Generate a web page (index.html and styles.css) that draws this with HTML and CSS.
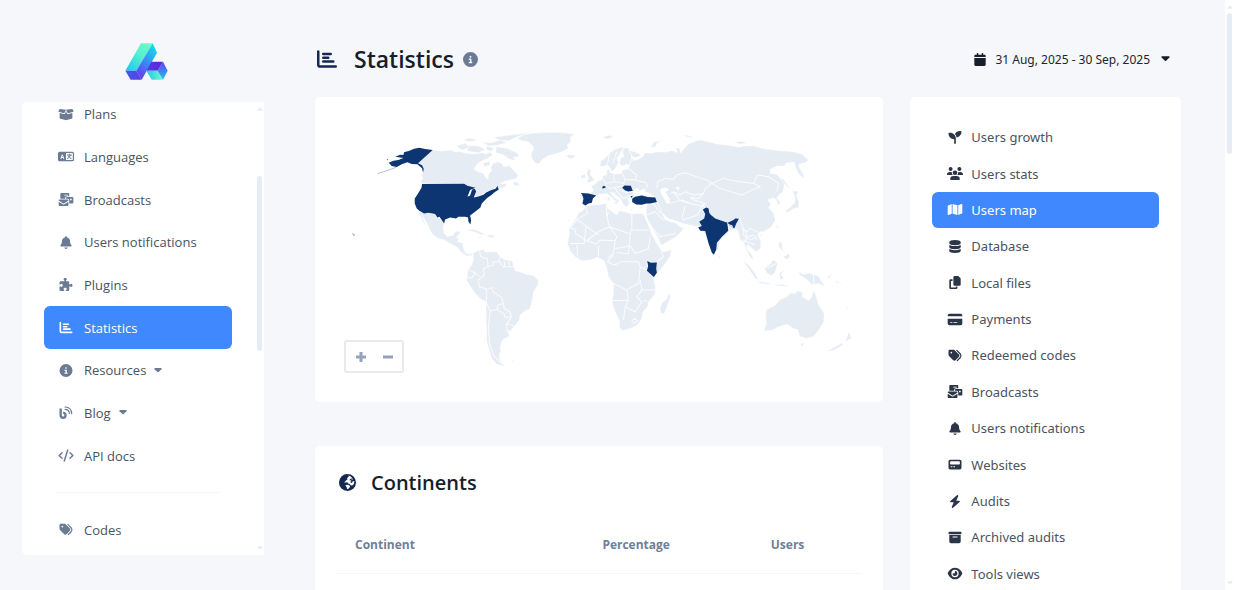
FILE: index.html
```html
<!DOCTYPE html>
<html lang="en">
<head>
<meta charset="utf-8">
<title>Statistics</title>
<link rel="stylesheet" href="styles.css">
</head>
<body>
<svg class="sprite" aria-hidden="true">
  <symbol id="i-chart" viewBox="0 0 512 512"><path d="M0 64a32 32 0 0 1 64 0V400a16 16 0 0 0 16 16H480a32 32 0 0 1 0 64H80A80 80 0 0 1 0 400ZM160 96H352a32 32 0 0 1 0 64H160a32 32 0 0 1 0-64ZM160 192H288a32 32 0 0 1 0 64H160a32 32 0 0 1 0-64ZM160 288H416a32 32 0 0 1 0 64H160a32 32 0 0 1 0-64Z"/></symbol>
  <symbol id="i-bell" viewBox="0 0 448 512"><path d="M224 0c-17.700 0-32 14.300-32 32V51.200C119 66 64 130.600 64 208v18.800c0 47-17.300 92.400-48.500 127.600l-7.400 8.300c-8.400 9.400-10.400 22.900-5.300 34.400S19.400 416 32 416H416c12.600 0 24-7.400 29.200-18.900s3.100-25-5.300-34.400l-7.400-8.300C401.300 319.200 384 273.900 384 226.800V208c0-77.400-55-142-128-156.800V32c0-17.700-14.300-32-32-32zm45.300 493.300c12-12 18.700-28.300 18.700-45.300H160c0 17 6.700 33.300 18.700 45.300s28.300 18.700 45.300 18.700s33.300-6.700 45.300-18.700z"/></symbol>
  <symbol id="i-info" viewBox="0 0 512 512"><path d="M256 512A256 256 0 1 0 256 0a256 256 0 1 0 0 512zM216 336h24V272H216a24 24 0 0 1 0-48h48a24 24 0 0 1 24 24v88h8a24 24 0 0 1 0 48H216a24 24 0 0 1 0-48zm40-208a32 32 0 1 1 0 64 32 32 0 1 1 0-64z"/></symbol>
  <symbol id="i-tags" viewBox="0 0 512 512"><path d="M345 39.100L472.800 168.400c52.400 53 52.400 138.200 0 191.200L360.800 472.900c-9.300 9.400-24.500 9.500-33.900.2s-9.500-24.500-.2-33.900L438.600 325.900c33.900-34.300 33.900-89.400 0-123.700L310.900 72.900c-9.300-9.400-9.200-24.600.2-33.900s24.600-9.200 33.900.2zM0 229.500V80C0 53.500 21.500 32 48 32H197.500c17 0 33.300 6.700 45.300 18.700l168 168c25 25 25 65.500 0 90.500L277.300 442.700c-25 25-65.500 25-90.500 0l-168-168C6.700 262.700 0 246.500 0 229.500zM144 144a32 32 0 1 0-64 0 32 32 0 1 0 64 0z"/></symbol>
  <symbol id="i-calendar" viewBox="0 0 448 512"><path d="M96 32V64H48C21.500 64 0 85.500 0 112v48H448V112c0-26.500-21.500-48-48-48H352V32a32 32 0 0 0-64 0V64H160V32a32 32 0 0 0-64 0zM448 192H0V464c0 26.500 21.500 48 48 48H400c26.500 0 48-21.500 48-48V192z"/></symbol>
  <symbol id="i-seedling" viewBox="0 0 512 512"><path d="M512 32c0 113.600-84.600 207.500-194.200 222c-7.100-53.400-30.600-101.600-65.300-139.300C290.800 46.300 364 0 448 0h32c17.700 0 32 14.300 32 32zM0 96C0 78.300 14.300 64 32 64H64c123.700 0 224 100.300 224 224v192a32 32 0 0 1-64 0V320C100.300 320 0 219.700 0 96z"/></symbol>
  <symbol id="i-users" viewBox="0 0 640 512"><circle cx="144" cy="80" r="80"/><circle cx="496" cy="80" r="80"/><circle cx="320" cy="225" r="94"/><path d="M0 300a108 108 0 0 1 107-108h42q25 0 46 10a128 128 0 0 0 40 118H22q-22 0-22-20ZM405 320a128 128 0 0 0 40-118q21-10 46-10h42a108 108 0 0 1 107 108q0 20-22 20ZM128 485A133 133 0 0 1 261 352H379A133 133 0 0 1 512 485q0 27-27 27H155q-27 0-27-27Z"/></symbol>
  <symbol id="i-map" viewBox="0 0 576 512"><path d="M384 476L192 421V36L384 91ZM416 475V88L543 37c16-6 33 5 33 22V395q0 16-15 22ZM15 95L160 37V424L33 475c-16 6-33-6-33-23V117q0-16 15-22Z"/></symbol>
  <symbol id="i-database" viewBox="0 0 448 512"><path d="M448 80v48c0 44-100 80-224 80S0 172 0 128V80C0 36 100 0 224 0S448 36 448 80zM393 215c21-8 40-17 55-29V288c0 44-100 80-224 80S0 332 0 288V186c15 12 34 21 55 29 45 16 105 25 169 25s124-9 169-25zM0 346c15 12 34 21 55 29 45 16 105 25 169 25s124-9 169-25c21-8 40-17 55-29v86c0 44-100 80-224 80S0 476 0 432V346z"/></symbol>
  <symbol id="i-copy" viewBox="0 0 448 512"><path d="M208 0H332q20 0 34 14l68 68q14 14 14 34V336a48 48 0 0 1-48 48H208a48 48 0 0 1-48-48V48a48 48 0 0 1 48-48zM48 128h80v64H64V448H256V416h64v48a48 48 0 0 1-48 48H48a48 48 0 0 1-48-48V176a48 48 0 0 1 48-48z"/></symbol>
  <symbol id="i-card" viewBox="0 0 576 512"><path d="M64 32A64 64 0 0 0 0 96v32H576V96a64 64 0 0 0-64-64ZM576 224H0V416a64 64 0 0 0 64 64H512a64 64 0 0 0 64-64ZM112 352h64a16 16 0 0 1 0 32H112a16 16 0 0 1 0-32ZM240 352H368a16 16 0 0 1 0 32H240a16 16 0 0 1 0-32Z" fill-rule="evenodd"/></symbol>
  <symbol id="i-mail" viewBox="0 0 576 512"><path fill-rule="evenodd" d="M64 32Q64 0 96 0H384q32 0 32 32v96H320q-64 0-64 64v32H64ZM224 64q-16 0-16 16t16 16H352q16 0 16-16t-16-16ZM320 160H544q32 0 32 32V384q0 32-32 32H416V288q0-60-60-64H288V192q0-32 32-32ZM448 224v64h64v-64ZM0 288q0-32 32-32H352q32 0 32 32v12L208 410q-16 10-32 0L0 300ZM0 344 158 442q34 20 68 0L384 344V480q0 32-32 32H32q-32 0-32-32Z"/></symbol>
  <symbol id="i-site" viewBox="0 0 512 512"><path fill-rule="evenodd" d="M64 64H448a64 64 0 0 1 64 64V384a64 64 0 0 1-64 64H64a64 64 0 0 1-64-64V128a64 64 0 0 1 64-64ZM96 128q-32 0-32 32v64q0 32 32 32H416q32 0 32-32V160q0-32-32-32ZM88 320v48h64v-48ZM192 320v48h64v-48Z"/></symbol>
  <symbol id="i-bolt" viewBox="0 0 448 512"><path d="M349 45c6-14 2-30-10-39s-29-8-40 2l-256 224c-10 9-14 23-9 35s17 21 30 21H175L99 467c-6 14-2 30 10 39s29 8 40-2l256-224c10-9 14-23 9-35s-17-21-30-21H273L349 45z"/></symbol>
  <symbol id="i-archive" viewBox="0 0 512 512"><path fill-rule="evenodd" d="M32 32H480a32 32 0 0 1 32 32V96a32 32 0 0 1-32 32H32A32 32 0 0 1 0 96V64A32 32 0 0 1 32 32ZM32 160H480V416a64 64 0 0 1-64 64H96a64 64 0 0 1-64-64ZM176 212a24 24 0 0 0 0 48H336a24 24 0 0 0 0-48Z"/></symbol>
  <symbol id="i-eye" viewBox="0 0 576 512"><path fill-rule="evenodd" d="M288 32C207 32 142 69 95 113C49 156 17 208 3 244q-5 12 0 24C17 304 49 356 95 399C142 443 207 480 288 480s146-37 193-81c46-43 78-95 92-131q5-12 0-24C559 208 527 156 481 113C434 69 369 32 288 32ZM144 256a144 144 0 1 1 288 0 144 144 0 1 1-288 0ZM288 192q0 64-64 64-16 0-32-4a96 96 0 1 0 92-92q4 16 4 32Z"/></symbol>
  <symbol id="i-puzzle" viewBox="0 0 512 512"><path d="M192 105q0-13-13-23-19-14-19-34c0-27 29-48 64-48s64 21 64 48q0 20-19 34-13 10-13 23 0 23 23 23h57a48 48 0 0 1 48 48v57q0 23 23 23 13 0 23-13 14-19 34-19c27 0 48 29 48 64s-21 64-48 64q-20 0-34-19-10-13-23-13-23 0-23 23V464a48 48 0 0 1-48 48H279q-23 0-23-23 0-13 13-23 19-14 19-34c0-27-29-48-64-48s-64 21-64 48q0 20 19 34 13 10 13 23 0 23-23 23H48a48 48 0 0 1-48-48V343q0-23 23-23 13 0 23 13 14 19 34 19c27 0 48-29 48-64s-21-64-48-64q-20 0-34 19-10 13-23 13-23 0-23-23V176a48 48 0 0 1 48-48H169q23 0 23-23Z"/></symbol>
  <symbol id="i-box" viewBox="0 0 640 512"><path d="M58 42Q65 30 80 32L320 64 260 190Q250 210 228 205L28 148Q8 142 16 122ZM582 42Q575 30 560 32L320 64 380 190Q390 210 412 205L612 148Q632 142 624 122ZM320 130 352 205Q375 250 425 238L576 196V390Q576 422 544 430L340 478Q320 484 300 478L96 430Q64 422 64 390V196L215 238Q265 250 288 205Z"/></symbol>
  <symbol id="i-lang" viewBox="0 0 640 512"><path fill-rule="evenodd" d="M64 64H576a64 64 0 0 1 64 64V384a64 64 0 0 1-64 64H64a64 64 0 0 1-64-64V128a64 64 0 0 1 64-64ZM320 112V400H576q16 0 16-16V128q0-16-16-16Z"/><path class="cut" d="M90 346 158 175H186L254 346H208L195 312H149L136 346ZM160 276H184L172 240Z" fill-rule="evenodd"/><path d="M372 196H540M456 160v36M500 200Q474 300 380 340M410 236Q450 310 528 340" fill="none" stroke="currentColor" stroke-width="38" stroke-linecap="round"/></symbol>
  <symbol id="i-blog" viewBox="0 0 512 512"><path d="M46 100V368A96 96 0 1 0 142 272" fill="none" stroke="currentColor" stroke-width="92"/><path d="M220 40Q470 50 480 300M220 130Q380 135 390 290" fill="none" stroke="currentColor" stroke-width="48" stroke-linecap="round"/></symbol>
  <symbol id="i-code" viewBox="0 0 640 512"><path d="M390 40 250 472M480 145 594 256 480 367M160 145 46 256 160 367" fill="none" stroke="currentColor" stroke-width="60" stroke-linecap="round" stroke-linejoin="round"/></symbol>
  <symbol id="i-globe" viewBox="0 0 512 512"><circle cx="256" cy="256" r="256"/><path class="cut" d="M250 48 300 60 275 100 240 120 260 155 220 185 185 225 150 245 205 258 250 245 275 285 325 298 360 350 400 350Q468 290 464 215L420 215 385 250 350 200 380 170 420 165Q370 55 250 48ZM190 330 275 320 335 365 320 405 270 463Q225 445 235 405Z"/><path d="M300 190 350 140 410 130 370 180ZM350 215 405 240 385 270 340 250Z"/></symbol>
  <symbol id="i-caret" viewBox="0 0 10 6"><path d="M1 0H9Q10 .5 9.300 1.300L5.700 5Q5 5.600 4.300 5L.7 1.300Q0 .5 1 0Z"/></symbol>
</svg>

<div class="app">
  <aside class="sidebar">
    <a class="logo" href="#" aria-label="Home">
      <svg viewBox="0 0 129 111" width="43" height="37">
        <defs>
          <linearGradient id="g1" x1="0" y1="1" x2="1" y2="0"><stop offset="0" stop-color="#18c8f2"/><stop offset=".55" stop-color="#58eed2"/><stop offset="1" stop-color="#70ffc4"/></linearGradient>
          <linearGradient id="g2" x1=".8" y1="0" x2=".2" y2="1"><stop offset="0" stop-color="#14dfe6"/><stop offset=".55" stop-color="#3d86f8"/><stop offset="1" stop-color="#6c37f0"/></linearGradient>
          <linearGradient id="g3"><stop offset="0" stop-color="#4b56ee"/><stop offset="1" stop-color="#5b25dc"/></linearGradient>
          <linearGradient id="g4"><stop offset="0" stop-color="#22c4ee"/><stop offset="1" stop-color="#70ffc4"/></linearGradient>
          <linearGradient id="g5" x1=".5" y1="0" x2=".6" y2="1"><stop offset="0" stop-color="#6a38f2"/><stop offset="1" stop-color="#1dc7ef"/></linearGradient>
        </defs>
        <path fill="url(#g1)" d="M48 1H83L34 83H1Z"/>
        <path fill="url(#g2)" d="M83 1 96 29 50 110 34 83Z"/>
        <path fill="url(#g3)" d="M1 83H34L50 110H17ZM79 56H114L98 83H64Z"/>
        <path fill="url(#g4)" d="M64 83H98L114 110H80Z"/>
        <path fill="url(#g5)" d="M114 56 128 83 114 110 98 83Z"/>
      </svg>
    </a>
    <div class="side-panel">
      <nav class="side-nav">
        <ul class="side-list">
          <li><a href="#"><svg class="icon"><use href="#i-box"/></svg>Plans</a></li>
          <li><a href="#"><svg class="icon"><use href="#i-lang"/></svg>Languages</a></li>
          <li><a href="#"><svg class="icon"><use href="#i-mail"/></svg>Broadcasts</a></li>
          <li><a href="#"><svg class="icon"><use href="#i-bell"/></svg>Users notifications</a></li>
          <li><a href="#"><svg class="icon"><use href="#i-puzzle"/></svg>Plugins</a></li>
          <li><a class="active" href="#"><svg class="icon"><use href="#i-chart"/></svg>Statistics</a></li>
          <li><a href="#"><svg class="icon"><use href="#i-info"/></svg>Resources<svg class="caret"><use href="#i-caret"/></svg></a></li>
          <li><a href="#"><svg class="icon"><use href="#i-blog"/></svg>Blog<svg class="caret"><use href="#i-caret"/></svg></a></li>
          <li><a href="#"><svg class="icon"><use href="#i-code"/></svg>API docs</a></li>
        </ul>
        <hr>
        <ul class="side-list-end">
          <li><a href="#"><svg class="icon"><use href="#i-tags"/></svg>Codes</a></li>
        </ul>
      </nav>
      <div class="side-scroll"><svg class="arrow up"><use href="#i-caret"/></svg><span class="thumb"></span><svg class="arrow"><use href="#i-caret"/></svg></div>
    </div>
  </aside>

  <main class="content">
    <header class="page-head">
      <h1><svg class="head-icon"><use href="#i-chart"/></svg>Statistics<svg class="head-info"><use href="#i-info"/></svg></h1>
      <button class="date" type="button"><svg class="date-icon"><use href="#i-calendar"/></svg>31 Aug, 2025 - 30 Sep, 2025<svg class="caret"><use href="#i-caret"/></svg></button>
    </header>
    <div class="columns">
      <div class="reports">
        <section class="card map-card">
          <svg class="map" viewBox="315 97 568 305" role="img" aria-label="Users map">
            <g transform="translate(350 120) scale(.33333)">
              <path class="land" d="M248 90 275 93 300 90 315 96 330 95 350 100 375 102 395 98 405 103 420 97 428 105 410 116 390 125 378 135 372 148 385 156 400 160 406 172 414 178 415 164 425 152 422 142 430 130 442 126 455 130 462 141 478 137 488 148 504 166 498 176 478 180 462 184 448 192 470 190 466 199 450 206 440 200 424 210 405 217 385 229 371 228 376 203 352 197 342 191 216 191 212 182 219 175 213 165 220 157 216 136 204 130Z"/>
              <path class="land" d="M320 78 345 70 360 82 335 90ZM350 76 385 78 405 88 385 98 352 93ZM395 66 425 68 450 60 470 68 440 76 415 78ZM430 52 480 46 540 38 500 50 475 62 450 60ZM438 80 470 85 500 98 508 108 490 112 497 122 478 118 462 105 438 98ZM410 78 430 84 425 94 408 90ZM490 184 504 188 508 197 490 195ZM340 62 370 64 380 58 355 55ZM398 130 418 124 420 135 405 140Z"/>
              <path class="land" d="M502 55 520 45 545 40 600 37 640 38 672 42 660 52 662 65 650 75 655 85 635 95 610 103 592 108 575 120 566 132 555 128 545 115 543 100 550 90 548 78 535 65 515 62ZM648 108 658 104 675 106 672 113 658 116Z"/>
              <path class="land" d="M206 274 222 280 235 278 255 282 262 292 275 300 282 310 279 325 282 340 292 350 308 346 316 335 332 333 326 345 318 352 325 354 323 366 338 368 340 386 348 400 358 402 370 398 364 406 350 407 335 398 322 382 302 371 283 360 262 354 247 342 238 325 228 305 216 284 220 300 230 322 218 305 212 290Z"/>
              <path class="land" d="M350 332 368 327 388 334 405 343 390 343 370 334ZM408 346 425 344 436 350 422 353ZM385 351 396 352 388 355Z"/>
              <path class="user" d="M116 128 130 122 145 120 160 114 136 110 150 104 160 105 162 97 178 92 192 86 208 83 225 87 248 90 204 130 216 136 221 146 219 158 216 145 202 133 185 132 172 127 155 133 140 141 125 138ZM110 117l5 2-3 2Z"/>
              <path class="isles" d="M138 142 110 152 82 161M8 340 14 344 11 348Z"/>
              <path class="user" d="M216 192 342 191 352 197 376 203 360 210 352 230 360 226 366 208 374 206 378 214 371 232 385 229 400 224 408 217 424 210 436 206 442 198 446 208 432 217 424 225 412 233 405 240 395 250 391 262 375 275 360 286 363 300 361 313 355 305 354 292 345 290 325 290 318 295 300 292 285 298 282 310 275 300 268 290 262 292 255 282 235 278 222 280 208 272 200 265 194 250 194 235 202 223 214 204Z"/>
            </g>
            <g transform="translate(350 240) scale(.33333)">
              <path class="land" d="M370 38 385 31 400 28 405 36 425 35 440 36 450 50 465 60 485 62 492 80 495 92 515 97 530 103 550 107 565 120 563 135 550 155 546 180 540 205 525 212 510 225 507 240 495 255 482 272 472 272 478 288 460 297 455 305 450 320 452 332 447 345 450 360 464 378 440 372 425 355 418 330 410 305 410 280 408 240 408 185 390 175 375 160 362 140 349 120 352 110 352 92 365 75 370 60ZM484 361 494 362 488 365Z"/>
              <path class="edge" d="M388 32 392 50 412 56 414 80 400 85 403 105 384 120 388 140 407 146 410 165 408 185 420 212 415 260 418 310 430 345 455 372M414 80 430 75 428 66 447 64 450 50M447 64 460 80 492 80M462 62 464 80M476 62 478 78M354 90 376 98 366 112 352 114M376 98 388 110M407 150 425 142 428 155 455 172 460 190 445 194 440 208 420 212M460 190 462 205 480 215 484 230 465 232 462 222 440 208M484 232 470 250 470 272M470 250 495 260"/>
            </g>
            <g transform="translate(560 120) scale(.33333)">
              <path class="land" d="M192 84 202 84 212 92 235 100 242 108 225 112 214 109 220 122 235 118 250 108 255 98 275 100 290 95 315 97 335 92 352 98 348 85 356 83 362 100 372 85 385 72 410 62 425 60 445 66 470 72 500 75 535 82 550 78 580 78 620 88 660 92 700 95 725 103 745 120 735 128 715 133 718 145 730 165 730 175 715 160 705 140 702 126 680 128 670 138 650 138 630 148 630 160 650 163 664 178 672 192 668 215 655 225 650 235 662 248 655 255 648 240 640 232 622 240 632 252 625 262 640 280 645 300 632 322 610 335 600 335 592 345 602 365 600 385 588 395 575 385 562 372 560 385 575 405 580 420 570 412 555 385 550 365 540 360 535 335 525 325 510 330 500 340 480 360 473 390 460 398 450 370 440 345 425 330 412 318 400 318 375 312 355 305 340 300 325 296 308 280 302 276 315 298 330 305 345 308 360 320 370 325 358 340 345 352 310 372 302 375 295 355 280 330 264 300 258 285 258 270 262 252 245 254 216 246 213 234 202 235 207 250 199 262 188 250 180 235 165 222 160 216 150 218 162 232 178 242 172 248 165 242 150 228 142 220 125 222 108 226 98 235 95 248 76 255 66 250 66 224 62 219 92 220 100 210 92 197 104 193 112 183 125 180 126 170 140 163 140 150 148 148 150 158 165 163 185 160 187 150 205 146 208 136 200 133 185 138 178 130 180 118 192 108 186 98Z"/>
              <path class="land" d="M120 138 122 122 135 115 150 98 165 88 185 82 196 85 182 97 170 115 175 128 165 145 155 155 148 140 138 135 128 140ZM84 147 92 150 90 163 102 178 98 185 78 187 86 176 80 160ZM62 168 74 162 76 172 64 176ZM128 50 150 46 158 52 140 57ZM272 80 282 66 305 62 290 70 284 82ZM370 44 392 48 400 53 380 50ZM520 66 545 64 560 68 540 72ZM142 232 148 230 148 242 142 241ZM160 246 172 246 168 254ZM205 268 218 268 215 272ZM238 262 250 258 244 266Z"/>
              <path class="sea" d="M218 222 222 208 232 203 240 212 250 207 258 206 252 213 272 222 284 231 262 229 245 225 225 228ZM300 208 312 202 322 204 326 210 316 216 328 235 330 248 320 252 313 238 303 222ZM346 202 358 200 356 212Z"/>
              <path class="land" d="M76 258 100 255 120 253 138 250 142 265 155 274 170 285 178 272 195 275 215 282 240 280 250 282 258 302 268 325 275 345 290 370 302 388 310 396 333 389 330 408 312 435 290 460 281 476 285 500 285 522 265 545 262 560 248 575 245 595 230 615 210 625 185 632 178 620 178 602 165 575 155 545 160 520 160 490 145 470 140 445 132 422 112 411 90 420 65 422 45 410 30 392 22 370 28 340 26 325 45 300 55 280 70 270ZM327 518 331 530 320 560 312 580 302 580 300 565 305 548 318 538ZM20 299 30 300 24 303Z"/>
              <path class="edge" d="M76 258 82 280 50 298 30 325 45 327 46 340 80 362 115 335 148 320 140 290 138 250M140 290 145 275M50 298 78 318 115 345M148 320 210 342 212 330 266 330M215 282 215 330M78 318 72 370 30 370M80 362 108 372 120 360 165 362 170 350 148 320M115 378 115 410M50 375 52 410M165 362 160 400 142 415M170 398 205 400 210 342M165 385 210 378 225 400 265 385 270 350M160 405 142 425 160 435 175 430 180 425 235 425 240 440 235 490 215 500 200 510 160 490M200 510 205 540 155 542M240 440 262 452 260 430 265 423M240 480 245 510 283 510M205 540 195 560 190 600M195 560 225 575 245 545 230 530 245 510M250 540 262 545M215 602 225 595 232 603 222 610ZM300 385 310 410 290 425M258 285 285 275 310 300M258 300 300 350 345 340"/>
              <path class="edge" d="M192 84 185 92 190 108M206 85 215 110 208 136M148 98 142 135M170 95 158 130M205 146 230 165 225 180 258 188 262 203M187 160 195 180 225 178M160 165 163 185 190 190 195 180M126 172 135 190 163 185M135 195 150 205 188 198M165 205 178 225 190 235 215 225M180 210 200 218 218 214M290 205 292 185 315 175 340 178 350 165 375 158 415 172 440 180 455 190 435 205 430 220 400 225 375 215 358 225 340 215 330 222M455 190 490 175 520 182 580 190 592 165 625 170 655 190 650 215M455 190 478 205 545 225 585 205 600 200 580 190M340 215 358 240 385 250M430 220 415 235 390 232 400 240 435 250 425 260M330 250 365 240 395 252 425 258 412 285 370 300 365 290 375 260M290 246 305 275M262 252 280 250 300 280M425 250 460 300 500 312 540 295 548 325 560 335 570 325 600 340M548 325 550 345 570 360 590 350M548 360 585 375"/>
              <path class="user" d="M62 219 85 220 108 226 98 235 95 248 85 250 76 256 67 251 70 235 66 224ZM126 201 131 197 138 201 133 204 127 205ZM186 203 193 196 212 197 216 208 218 212 205 214 195 211ZM211 228 217 228 215 234ZM216 236 225 230 245 226 262 231 285 232 290 246 270 250 258 250 245 254 228 253 216 246ZM261 423 272 428 290 427 288 445 290 458 281 471 260 452 264 438Z"/>
            </g>
            <g transform="translate(690 120) scale(.33333)">
              <path class="user" d="M48 262 55 265 57 278 62 285 75 295 105 306 112 308 130 300 135 295 146 296 138 310 132 325 122 318 112 314 114 332 95 350 80 368 78 388 71 404 65 398 55 370 48 345 45 333 30 332 24 322 35 318 27 305 42 295 45 282 38 268Z"/>
              <path class="edge" d="M112 308 117 328 122 332 126 318 114 313"/>
              <path class="land" d="M157 420 175 435 195 460 205 480 195 475 178 450ZM203 484 235 488 240 493 210 490ZM245 492 280 494 300 500 270 498ZM222 443 240 432 250 418 262 430 255 455 245 466 230 460ZM268 458 285 450 272 462 280 475 270 480ZM325 455 340 463 355 459 385 468 392 482 405 500 385 490 365 494 350 478 330 466ZM265 368 274 365 276 385 285 398 275 390 266 380ZM280 410 296 400 298 412 288 418ZM84 403 90 410 86 416ZM208 343 216 344 212 350ZM258 318 263 315 262 328ZM408 472 425 463 418 474ZM465 558 474 566 470 566ZM432 480 460 495 440 488ZM478 525 488 535Z"/>
              <path class="land" d="M308 212 325 215 318 225 326 245 325 262 310 265 292 277 285 272 298 264 312 250 315 235ZM272 172 280 178 300 205 295 203 278 185Z"/>
              <path class="land" d="M228 570 255 555 270 538 290 530 300 519 315 520 322 512 338 517 335 530 355 542 364 530 370 508 378 530 385 555 402 580 400 605 385 630 370 648 348 655 328 648 322 628 310 625 290 612 265 620 245 630 222 632 228 610 226 585ZM330 671 343 668 336 679ZM476 634 483 655 465 664 470 652ZM455 668 458 674 430 690 408 695 430 682Z"/>
              <path class="edge" d="M370 460V495M222 443 240 440 258 430M165 330 170 350 160 370 175 395M172 350 190 345 200 360"/>
            </g>
          </svg>
          <div class="zoom">
            <button type="button" aria-label="Zoom in"><svg viewBox="0 0 12 12" width="12" height="12"><path d="M6 1V11M1 6H11"/></svg></button>
            <button type="button" aria-label="Zoom out"><svg viewBox="0 0 12 12" width="12" height="12"><path d="M1 6H11"/></svg></button>
          </div>
        </section>
        <section class="card continents">
          <h2><svg class="globe"><use href="#i-globe"/></svg>Continents</h2>
          <table>
            <thead><tr><th>Continent</th><th>Percentage</th><th>Users</th></tr></thead>
          </table>
        </section>
      </div>
      <nav class="card report-nav">
        <ul class="report-list">
          <li><a href="#"><svg class="icon"><use href="#i-seedling"/></svg>Users growth</a></li>
          <li><a href="#"><svg class="icon"><use href="#i-users"/></svg>Users stats</a></li>
          <li><a class="active" href="#"><svg class="icon"><use href="#i-map"/></svg>Users map</a></li>
          <li><a href="#"><svg class="icon"><use href="#i-database"/></svg>Database</a></li>
          <li><a href="#"><svg class="icon"><use href="#i-copy"/></svg>Local files</a></li>
          <li><a href="#"><svg class="icon"><use href="#i-card"/></svg>Payments</a></li>
          <li><a href="#"><svg class="icon"><use href="#i-tags"/></svg>Redeemed codes</a></li>
          <li><a href="#"><svg class="icon"><use href="#i-mail"/></svg>Broadcasts</a></li>
          <li><a href="#"><svg class="icon"><use href="#i-bell"/></svg>Users notifications</a></li>
          <li><a href="#"><svg class="icon"><use href="#i-site"/></svg>Websites</a></li>
          <li><a href="#"><svg class="icon"><use href="#i-bolt"/></svg>Audits</a></li>
          <li><a href="#"><svg class="icon"><use href="#i-archive"/></svg>Archived audits</a></li>
          <li><a href="#"><svg class="icon"><use href="#i-eye"/></svg>Tools views</a></li>
        </ul>
      </nav>
    </div>
  </main>
  <div class="page-scroll"><svg class="arrow up"><use href="#i-caret"/></svg><span class="thumb"></span><svg class="arrow"><use href="#i-caret"/></svg></div>
</div>
</body>
</html>
```
FILE: styles.css
```css
* { box-sizing: border-box; }
body {
  margin: 0;
  background: #f5f7fa;
  color: #4a5361;
  font-family: "Open Sans", "Noto Sans", sans-serif;
  font-size: 13px;
}
ul { list-style: none; margin: 0; padding: 0; }
a { color: inherit; text-decoration: none; }
button { font: inherit; color: inherit; background: none; border: 0; padding: 0; }
svg { flex: none; fill: currentColor; }
.sprite { position: absolute; width: 0; height: 0; }
.cut { fill: #fff; }

.app { display: flex; height: 100vh; overflow: hidden; }

.sidebar {
  display: flex;
  flex-direction: column;
  gap: 22px;
  flex: none;
  width: 264px;
  padding: 43px 0 35px 22px;
}
.logo { display: flex; justify-content: center; padding-left: 7px; }
.side-panel {
  display: flex;
  flex: 1;
  min-height: 0;
  overflow: hidden;
  background: #fff;
  border-radius: 5px 0 0 5px;
}
.side-nav { flex: 1; margin-top: -9px; padding: 0 23px 0 22px; }
.side-list { display: grid; grid-auto-rows: 1fr; height: 384px; }
.side-nav a {
  display: flex;
  align-items: center;
  height: 100%;
  padding-left: 14px;
  border-radius: 6px;
}
.side-nav .icon { width: 16px; height: 13px; margin-right: 10px; color: #6b7b94; }
.side-nav hr { margin: 15px 12px; border: 0; border-top: 1px solid #f3f5f8; }
.side-list-end { height: 43px; }
.side-list-end li { height: 100%; }
.caret { width: 8px; height: 5px; margin-left: 8px; color: #6b7b94; }
.side-nav .active, .report-nav .active { background: #3f88fd; color: #fff; }
.side-nav .active .icon, .report-nav .active .icon { color: #fff; }

.side-scroll, .page-scroll {
  display: flex;
  flex-direction: column;
  align-items: center;
  flex: none;
  width: 9px;
  padding: 5px 0;
  background: #fff;
  color: #e6ecf4;
}
.arrow { width: 6px; height: 4px; }
.arrow.up { transform: rotate(180deg); }
.arrow:last-child { margin-top: auto; }
.thumb { width: 5px; border-radius: 3px; background: #e6ecf5; }
.side-scroll .thumb { height: 175px; margin-top: 65px; }
.page-scroll .thumb { height: 141px; margin-top: 4px; }

.content { flex: 1; min-width: 0; padding: 39px 44px 0 51px; }
.page-head {
  display: flex;
  align-items: center;
  justify-content: space-between;
  height: 40px;
  margin-bottom: 18px;
  padding-right: 11px;
}
h1, h2 { display: flex; align-items: center; margin: 0; color: #171e2b; font-weight: 600; }
h1 { font-size: 23px; }
.head-icon { width: 20px; height: 20px; margin: 0 17px 0 2px; color: #14284f; }
.head-info { width: 15px; height: 15px; margin-left: 9px; color: #6b7b94; }
.date { display: flex; align-items: center; font-family: "Noto Sans", sans-serif; font-size: 12px; color: #20262f; }
.date-icon { width: 12px; height: 13px; margin-right: 9px; color: #171e2b; }
.date .caret { width: 9px; height: 6px; margin-left: 11px; color: #171e2b; }

.columns { display: grid; grid-template-columns: 21fr 10fr; gap: 27px; }
.card { background: #fff; border-radius: 5px; }
.reports { display: flex; flex-direction: column; gap: 44px; }
.map-card { position: relative; }
.map { display: block; width: 100%; }
.land { fill: #e6ecf4; stroke: #fff; stroke-width: 1; }
.sea { fill: #fff; }
.edge { fill: none; stroke: #fafcfe; stroke-width: 3; stroke-linejoin: round; }
.user { fill: #0d3572; }
.isles { fill: none; stroke: #8fa3c0; stroke-width: 2; }
.zoom {
  position: absolute;
  left: 29px;
  bottom: 29px;
  display: flex;
  width: 60px;
  height: 33px;
  padding: 0 1px;
  border: 2px solid #e9eaec;
  border-radius: 3px;
}
.zoom button { display: grid; flex: 1; place-items: center; }
.zoom path { stroke: #94a3b8; stroke-width: 3; }

.continents { min-height: 200px; padding: 20px 21px; }
.continents h2 { height: 32px; font-size: 20px; }
.globe { width: 17px; height: 17px; margin: 0 15px 0 3px; color: #14284f; }
table { width: 100%; margin-top: 18px; border-collapse: collapse; table-layout: fixed; }
th {
  height: 57px;
  padding: 0 0 0 19px;
  border-bottom: 1px solid #f5f6f8;
  color: #6f7f97;
  font-size: 12px;
  font-weight: 700;
  text-align: left;
}
th:first-child { width: 47%; }
th:nth-child(2) { width: 32%; }

.report-nav { padding: 22px; }
.report-list { display: grid; grid-auto-rows: 1fr; height: 473px; }
.report-nav a {
  display: flex;
  align-items: center;
  height: 100%;
  padding-left: 15px;
  border-radius: 6px;
  font-family: "Noto Sans", sans-serif;
  font-size: 13px;
}
.report-nav .icon { width: 16px; height: 13px; margin-right: 8px; color: #2b3547; }
```
